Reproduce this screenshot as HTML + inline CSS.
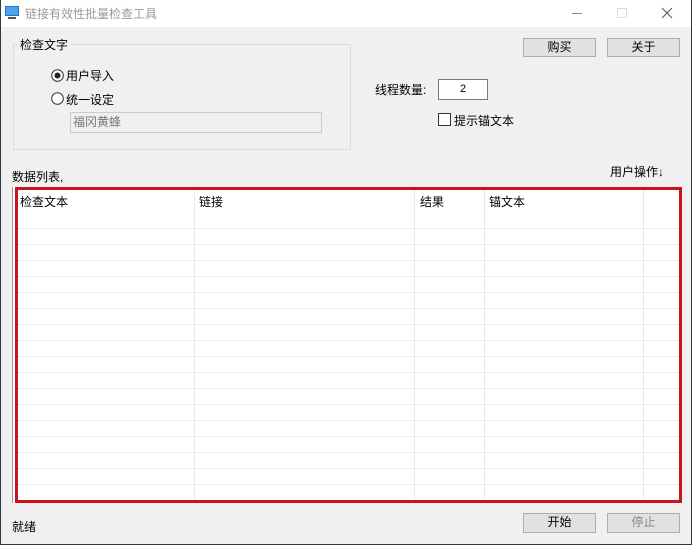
<!DOCTYPE html>
<html><head><meta charset="utf-8"><style>
*{margin:0;padding:0;box-sizing:border-box}
body{width:692px;height:545px;background:#f0f0f0;font-family:"Liberation Sans","Noto Sans CJK SC",sans-serif;font-size:12px;color:#000;position:relative;overflow:hidden}
.a{position:absolute}
.btn{position:absolute;background:#e1e1e1;border:1px solid #adadad;text-align:center;line-height:17px}
.rl{position:absolute;left:17px;width:662px;height:1px;background:#eeeeee}
.cl{position:absolute;top:190px;width:1px;height:310px;background:#e8e8e8}
</style></head><body>
<div class="a" style="left:0;top:0;width:692px;height:27px;background:#fff"></div>
<svg class="a" style="left:4px;top:5px" width="16" height="16"><rect x="1" y="1" width="14" height="10" fill="#1e74c8"/><rect x="2" y="2" width="12" height="8" fill="#4fa3e8"/><rect x="4" y="12" width="8" height="2" fill="#555"/></svg>
<div class="a" style="left:25px;top:5px;color:#9a9a9a;font-size:12px">链接有效性批量检查工具</div>
<div class="a" style="left:572px;top:13px;width:10px;height:1px;background:#888"></div>
<div class="a" style="left:617px;top:8px;width:10px;height:10px;border:1px solid #ddd"></div>
<svg class="a" style="left:661px;top:7px" width="12" height="12"><path d="M1 1L11 11M11 1L1 11" stroke="#555" stroke-width="1"/></svg>

<div class="a" style="left:13px;top:44px;width:338px;height:106px;border:1px solid #dcdcdc"></div>
<div class="a" style="left:17px;top:36px;background:#f0f0f0;padding:0 3px">检查文字</div>
<svg class="a" style="left:51px;top:69px" width="13" height="13"><circle cx="6.5" cy="6.5" r="5.8" fill="#fff" stroke="#333"/><circle cx="6.5" cy="6.5" r="3" fill="#222"/></svg>
<div class="a" style="left:66px;top:67px">用户导入</div>
<svg class="a" style="left:51px;top:92px" width="13" height="13"><circle cx="6.5" cy="6.5" r="5.8" fill="#fff" stroke="#333"/></svg>
<div class="a" style="left:66px;top:91px">统一设定</div>
<div class="a" style="left:70px;top:112px;width:252px;height:21px;border:1px solid #ccc;background:#f0f0f0;color:#777;padding:2px 2px;line-height:15px">福冈黄蜂</div>

<div class="btn" style="left:523px;top:38px;width:73px;height:19px">购买</div>
<div class="btn" style="left:607px;top:38px;width:73px;height:19px">关于</div>
<div class="a" style="left:375px;top:81px">线程数量:</div>
<div class="a" style="left:438px;top:79px;width:50px;height:21px;border:1px solid #7a7a7a;background:#fff;text-align:center;line-height:19px;font-size:11px">2</div>
<div class="a" style="left:438px;top:113px;width:13px;height:13px;border:1px solid #333;background:#fff"></div>
<div class="a" style="left:454px;top:112px">提示锚文本</div>

<div class="a" style="left:12px;top:168px">数据列表,</div>
<div class="a" style="left:610px;top:163px">用户操作↓</div>

<div class="a" style="left:12px;top:187px;width:670px;height:316px;background:#fff;border-left:1px solid #999"></div>
<div class="rl" style="top:228px"></div><div class="rl" style="top:244px"></div><div class="rl" style="top:260px"></div><div class="rl" style="top:276px"></div><div class="rl" style="top:292px"></div><div class="rl" style="top:308px"></div><div class="rl" style="top:324px"></div><div class="rl" style="top:340px"></div><div class="rl" style="top:356px"></div><div class="rl" style="top:372px"></div><div class="rl" style="top:388px"></div><div class="rl" style="top:404px"></div><div class="rl" style="top:420px"></div><div class="rl" style="top:436px"></div><div class="rl" style="top:452px"></div><div class="rl" style="top:468px"></div><div class="rl" style="top:484px"></div>
<div class="cl" style="left:194px"></div><div class="cl" style="left:414px"></div><div class="cl" style="left:484px"></div><div class="cl" style="left:643px"></div>
<div class="a" style="left:20px;top:193px">检查文本</div>
<div class="a" style="left:199px;top:193px">链接</div>
<div class="a" style="left:420px;top:193px">结果</div>
<div class="a" style="left:489px;top:193px">锚文本</div>
<div class="a" style="left:15px;top:187px;width:667px;height:316px;border:3px solid #c8141c"></div>

<div class="a" style="left:12px;top:518px">就绪</div>
<div class="btn" style="left:523px;top:513px;width:73px;height:20px">开始</div>
<div class="btn" style="left:607px;top:513px;width:73px;height:20px;color:#888">停止</div>
<div class="a" style="left:0;top:0;width:692px;height:545px;border-left:1px solid #2b3a4a;border-right:1px solid #2b3a4a;border-bottom:1px solid #2b3a4a"></div>
</body></html>
